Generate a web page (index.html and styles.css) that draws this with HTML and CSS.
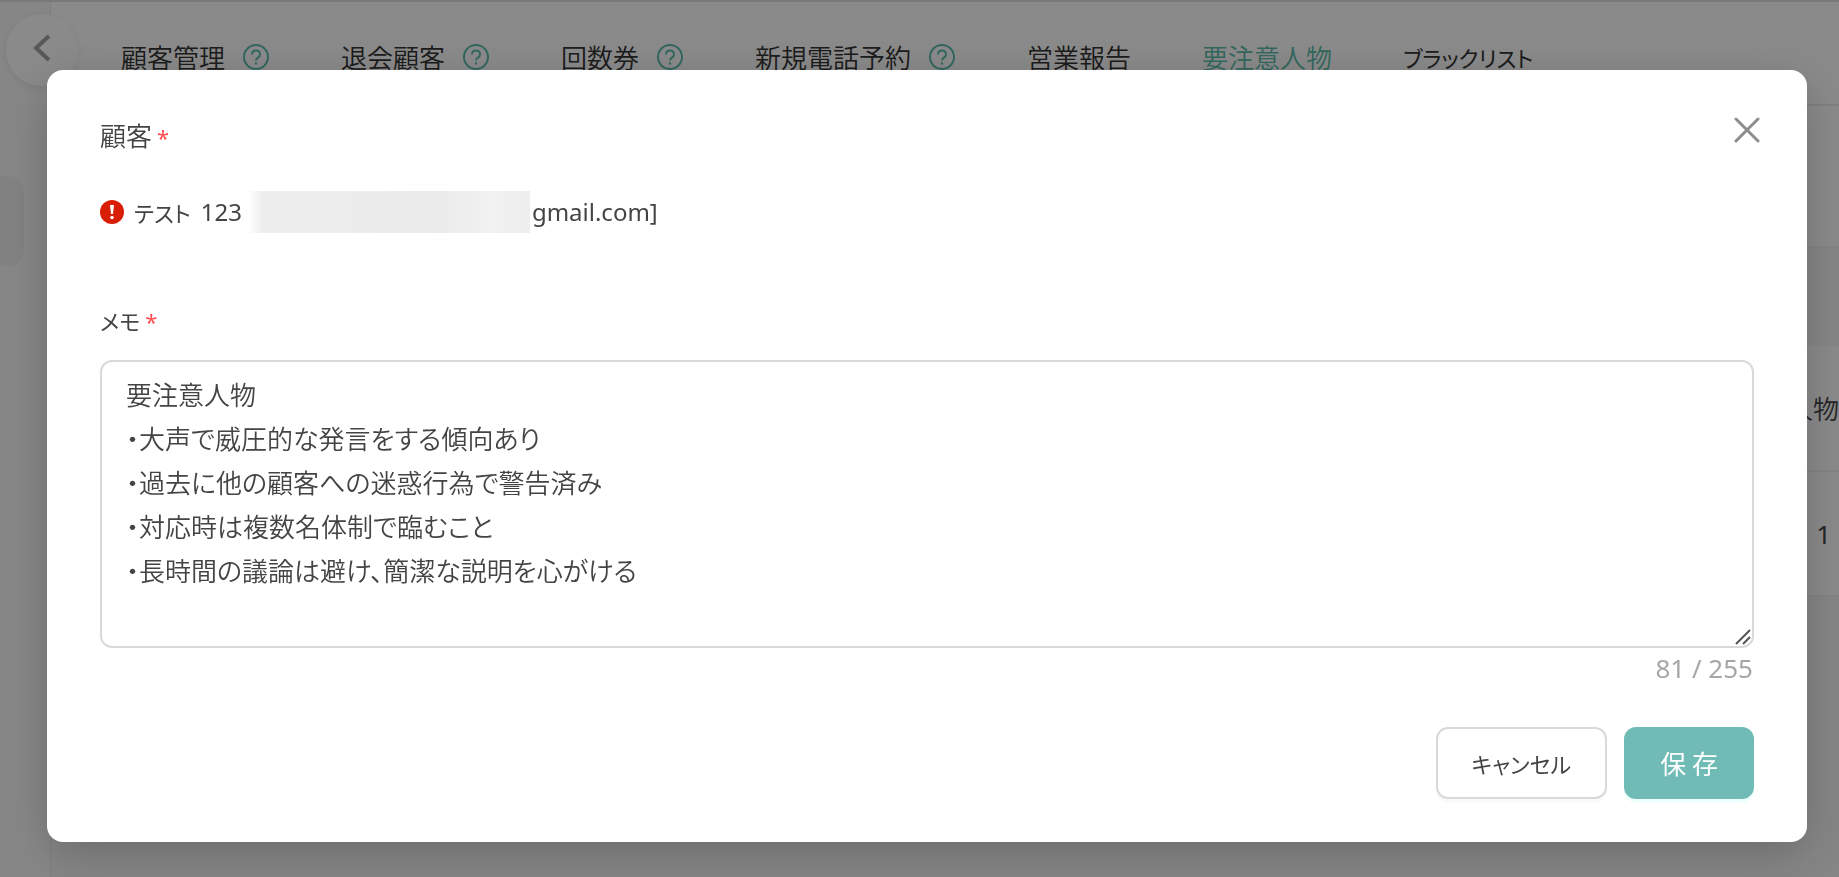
FILE: index.html
```html
<!DOCTYPE html>
<html lang="ja">
<head>
    <meta charset="UTF-8">
    <meta name="viewport" content="width=device-width, initial-scale=1.0">
    <title>要注意人物</title>
    <link rel="stylesheet" href="styles.css">
</head>
<body>

<div class="page">
    <aside class="sidebar">
        <button type="button" class="collapse-btn" aria-label="メニューを閉じる">
            <svg width="18" height="28" viewBox="0 0 18 28" fill="none" stroke="currentColor" stroke-width="4"><path d="M16 2 3 14l13 12"/></svg>
        </button>
        <div class="sidebar-item"></div>
    </aside>

    <main class="content">
        <nav class="tabs">
            <a href="#" class="tab">顧客管理
                <svg class="help" viewBox="0 0 28 28"><circle cx="14" cy="14" r="12"/><path d="M10 11.5c0-5.2 8-5.2 8 0 0 3.2-4 3-4 6"/><path d="M14 19.3v2.2"/></svg>
            </a>
            <a href="#" class="tab">退会顧客
                <svg class="help" viewBox="0 0 28 28"><circle cx="14" cy="14" r="12"/><path d="M10 11.5c0-5.2 8-5.2 8 0 0 3.2-4 3-4 6"/><path d="M14 19.3v2.2"/></svg>
            </a>
            <a href="#" class="tab">回数券
                <svg class="help" viewBox="0 0 28 28"><circle cx="14" cy="14" r="12"/><path d="M10 11.5c0-5.2 8-5.2 8 0 0 3.2-4 3-4 6"/><path d="M14 19.3v2.2"/></svg>
            </a>
            <a href="#" class="tab">新規電話予約
                <svg class="help" viewBox="0 0 28 28"><circle cx="14" cy="14" r="12"/><path d="M10 11.5c0-5.2 8-5.2 8 0 0 3.2-4 3-4 6"/><path d="M14 19.3v2.2"/></svg>
            </a>
            <a href="#" class="tab">営業報告</a>
            <a href="#" class="tab active">要注意人物</a>
            <a href="#" class="tab kana">ブラックリスト</a>
        </nav>
        <div class="toolbar"></div>
        <div class="spacer"></div>
        <table class="list">
            <thead>
                <tr><th>人物</th></tr>
            </thead>
            <tbody>
                <tr><td>1</td></tr>
            </tbody>
        </table>
    </main>
</div>

<div class="overlay">
    <form class="modal" role="dialog" aria-modal="true">
        <button type="button" class="close-btn" aria-label="閉じる">
            <svg width="26" height="26" viewBox="0 0 26 26" fill="none" stroke="currentColor" stroke-width="3" stroke-linecap="round"><path d="M2 2l22 22M24 2 2 24"/></svg>
        </button>

        <div class="label">顧客<span class="required">*</span></div>
        <div class="customer">
            <svg class="alert" viewBox="0 0 24 24"><circle cx="12" cy="12" r="12" fill="#d81e06"/><path d="M10 5h4l-1 9h-2z" fill="#fff"/><circle cx="12" cy="17.5" r="1.7" fill="#fff"/></svg>
            <span class="kana">テスト</span>
            <span class="latin">123</span>
            <span class="masked"></span>
            <span class="latin">gmail.com]</span>
        </div>

        <label class="label" for="memo"><span class="kana">メモ</span><span class="required">*</span></label>
        <div class="memo-box">
            <textarea class="memo" id="memo" rows="6" maxlength="255">要注意人物
・大声で威圧的な発言をする傾向あり
・過去に他の顧客への迷惑行為で警告済み
・対応時は複数名体制で臨むこと
・長時間の議論は避け、簡潔な説明を心がける</textarea>
            <svg class="grip" width="16" height="16" viewBox="0 0 16 16" fill="none" stroke="#555" stroke-width="2"><path d="M1 15 15 1M8 15l7-7"/></svg>
        </div>
        <div class="counter">81 / 255</div>

        <div class="actions">
            <button type="button" class="btn kana">キャンセル</button>
            <button type="submit" class="btn btn-primary">保 存</button>
        </div>
    </form>
</div>

</body>
</html>
```
FILE: styles.css
```css
* {
    box-sizing: border-box;
}
body {
    margin: 0;
    font-family: "Noto Sans CJK JP", sans-serif;
    font-size: 26px;
    font-weight: 350;
    font-feature-settings: "palt";
    line-height: 44px;
    color: #444;
    background-color: #f3f3f3;
}
button, textarea {
    font: inherit;
    font-feature-settings: inherit;
    color: inherit;
}
.page {
    display: flex;
    min-height: 100vh;
    border-top: 2px solid #ddd;
}
/* Left menu */
.sidebar {
    position: relative;
    width: 51px;
    padding-top: 174px;
    border-right: 1px solid #e8e8e8;
    background-color: #f5f5f5;
}
.sidebar-item {
    width: 24px;
    height: 90px;
    border-radius: 0 16px 16px 0;
    background-color: #ededed;
}
.collapse-btn {
    position: absolute;
    top: 12px;
    left: 6px;
    width: 72px;
    height: 72px;
    padding: 0;
    border: none;
    border-radius: 50%;
    background-color: #fcfcfc;
    box-shadow: 0 2px 10px rgba(0, 0, 0, 0.08);
    color: #a0a0a0;
}
.collapse-btn svg {
    display: block;
    margin: 0 auto 4px;
}
/* Page behind the dialog */
.content {
    flex: 1;
}
.tabs {
    display: flex;
    gap: 71px;
    height: 104px;
    padding: 33px 70px 0;
    border-bottom: 2px solid #e8e8e8;
    background-color: #fcfcfc;
}
.tab {
    display: flex;
    align-items: center;
    gap: 17px;
    height: 44px;
    color: #333;
    text-decoration: none;
    white-space: nowrap;
}
.tab.active {
    color: #5cbcaa;
}
.kana {
    font-size: 22px;
    font-weight: 400;
}
.help {
    width: 28px;
    height: 28px;
    fill: none;
    stroke: #5cbcaa;
    stroke-width: 2;
}
.toolbar {
    height: 142px;
    border-bottom: 2px solid #eee;
    background-color: #fcfcfc;
}
.spacer {
    height: 98px;
}
.list {
    width: 100%;
    border-collapse: collapse;
    background-color: #fcfcfc;
}
.list th, .list td {
    height: 125px;
    padding: 0;
    border-bottom: 2px solid #eee;
    font-weight: 350;
    text-align: right;
}
.list td {
    padding-right: 8px;
    font-family: "Noto Sans", sans-serif;
    font-weight: 400;
}
/* Dialog */
.overlay {
    position: fixed;
    inset: 0;
    padding: 70px 32px 35px 47px;
    background-color: rgba(0, 0, 0, 0.45);
}
.modal {
    position: relative;
    padding: 43px 53px;
    border-radius: 16px;
    background-color: #fff;
    box-shadow: 0 12px 48px rgba(0, 0, 0, 0.2);
}
.close-btn {
    position: absolute;
    top: 38px;
    right: 38px;
    width: 44px;
    height: 44px;
    padding: 0;
    border: none;
    background: none;
    color: #8c8c8c;
}
.close-btn svg {
    display: block;
    margin: auto;
}
.label {
    display: block;
    height: 44px;
}
.required {
    margin-left: 5px;
    font-family: "Noto Sans", sans-serif;
    font-size: 22px;
    font-weight: 400;
    color: #ff4d4f;
}
.customer {
    display: flex;
    align-items: center;
    height: 44px;
    margin: 33px 0 63px;
}
.alert {
    width: 24px;
    height: 24px;
    margin-right: 10px;
}
.latin {
    font-family: "Noto Sans", sans-serif;
    font-size: 24px;
    font-weight: 400;
}
.customer .latin {
    margin-left: 10px;
}
.masked {
    width: 282px;
    height: 42px;
    margin: 0 -8px 0 6px;
    background: linear-gradient(to right, #fff, #ededed 16px, #ebebeb 70%, #f2f2f2 85%, #eee);
}
.memo-box {
    position: relative;
    margin-top: 19px;
}
.memo {
    display: block;
    width: 100%;
    padding: 10px 24px;
    border: 2px solid #d9d9d9;
    border-radius: 12px;
    background-color: #fff;
    outline: none;
    resize: vertical;
}
.memo::-webkit-resizer {
    background: transparent;
}
/* Resize handle in the corner of the memo box */
.grip {
    position: absolute;
    right: 3px;
    bottom: 3px;
    pointer-events: none;
}
.counter {
    padding-right: 1px;
    font-family: "Noto Sans", sans-serif;
    font-weight: 400;
    line-height: 40px;
    text-align: right;
    color: #a6a6a6;
}
.actions {
    display: flex;
    justify-content: flex-end;
    gap: 17px;
    margin-top: 39px;
}
.btn {
    height: 72px;
    padding: 0 34px;
    border: 2px solid #d9d9d9;
    border-radius: 12px;
    background-color: #fff;
    box-shadow: 0 4px 0 rgba(0, 0, 0, 0.02);
    cursor: pointer;
}
.btn-primary {
    border-color: #70bbb5;
    background-color: #70bbb5;
    box-shadow: 0 4px 0 rgba(5, 255, 215, 0.06);
    font-weight: 400;
    color: #fff;
}
```
